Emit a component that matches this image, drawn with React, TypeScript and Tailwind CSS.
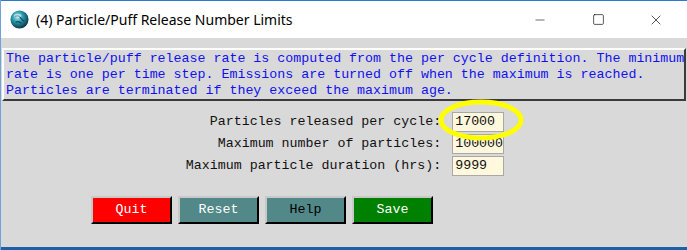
import { Minus, Square, X } from "lucide-react";

const mono = { fontFamily: '"Liberation Mono", "Courier New", monospace' };

const fields = [
  { label: "Particles released per cycle:", value: "17000" },
  { label: "Maximum number of particles:", value: "100000" },
  { label: "Maximum particle duration (hrs):", value: "9999" },
];

function AppIcon() {
  return (
    <svg width="19" height="19" viewBox="0 0 20 20">
      <defs>
        <radialGradient id="g" cx="40%" cy="35%" r="65%">
          <stop offset="0%" stopColor="#b9f0f4" />
          <stop offset="45%" stopColor="#2a9bb0" />
          <stop offset="100%" stopColor="#0b3a4a" />
        </radialGradient>
      </defs>
      <circle cx="10" cy="10" r="9.5" fill="url(#g)" />
      <path d="M5 7 Q9 5 11 8 T15 12 M6 13 Q9 11 12 14" stroke="#0d4f5f" strokeWidth="1.3" fill="none" />
      <ellipse cx="8" cy="6" rx="4" ry="2" fill="#ffffff" opacity="0.45" />
    </svg>
  );
}

function Btn({ label, className }: { label: string; className: string }) {
  return (
    <button
      className={`w-[81px] h-[28px] text-[13.3px] border-2 border-t-[#c8c8c8] border-l-[#c8c8c8] border-b-black border-r-black ${className}`}
      style={mono}
    >
      {label}
    </button>
  );
}

export default function App() {
  return (
    <div className="relative w-[687px] h-[250px] bg-[#d9d9d9] border-l border-[#6fa3d8] overflow-hidden flex flex-col">
      <div className="h-px bg-[#2b7ad1]" />
      <div className="h-[37px] bg-white flex items-center">
        <div className="ml-[9px] mr-[7px] flex items-center">
          <AppIcon />
        </div>
        <span className="text-[14px] text-black" style={{ fontFamily: '"Noto Sans", "Open Sans", sans-serif' }}>
          (4) Particle/Puff Release Number Limits
        </span>
        <div className="ml-auto flex items-center text-black">
          <div className="w-[58px] flex justify-center"><Minus size={14} strokeWidth={1} /></div>
          <div className="w-[58px] flex justify-center"><Square size={13} strokeWidth={1.2} /></div>
          <div className="w-[58px] flex justify-center mr-[2px]"><X size={16} strokeWidth={1} /></div>
        </div>
      </div>

      <div className="flex-1 flex flex-col">
        <div
          className="mt-[10px] ml-[1px] mr-[1px] h-[53px] border-2 border-t-white border-l-white border-b-[#3a3a3a] border-r-[#3a3a3a] pl-[2px] pt-[1px] text-[13.3px] leading-[16px] text-[#1010f0] whitespace-nowrap overflow-hidden"
          style={mono}
        >
          <div>The particle/puff release rate is computed from the per cycle definition. The minimum</div>
          <div>rate is one per time step. Emissions are turned off when the maximum is reached.</div>
          <div>Particles are terminated if they exceed the maximum age.</div>
        </div>

        <div className="mt-[11px] grid grid-cols-[auto_auto] justify-center gap-x-[11px] gap-y-[2px] ml-[2px]" style={mono}>
          {fields.map((f) => (
            <div key={f.label} className="contents">
              <div className="text-right text-[13.3px] text-[#111] h-[20px] leading-[20px]">{f.label}</div>
              <div className="w-[52px] h-[20px] bg-[#fff8dc] border border-[#a8a8a8] overflow-hidden whitespace-nowrap text-[13.3px] leading-[18px] pl-[2px] text-[#111]">
                {f.value}
              </div>
            </div>
          ))}
        </div>

        <div className="mt-[20px] pl-[90px] flex gap-[6px]">
          <Btn label="Quit" className="bg-[#ff0000] text-white" />
          <Btn label="Reset" className="bg-[#528888] text-white" />
          <Btn label="Help" className="bg-[#528888] text-black" />
          <Btn label="Save" className="bg-[#008000] text-white" />
        </div>
      </div>

      <div className="h-[3px] bg-[#1e5fa8]" />

      <svg className="absolute left-[437px] top-[99px]" width="86" height="42" viewBox="0 0 86 42">
        <ellipse cx="43" cy="21" rx="40" ry="18" fill="none" stroke="#ffff00" strokeWidth="5" />
      </svg>
    </div>
  );
}
